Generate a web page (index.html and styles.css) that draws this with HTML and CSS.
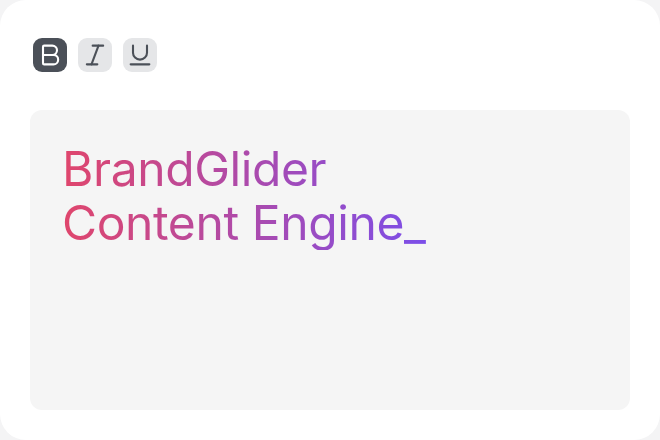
FILE: index.html
```html
<!DOCTYPE html>
<html>
<head>
<meta charset="utf-8">
<link rel="stylesheet" href="styles.css">
</head>
<body>
<div class="card">
  <div class="toolbar">
    <button class="tool active" aria-label="Bold">
      <svg viewBox="0 0 24 24" width="28" height="28"><path d="M6 12h9a4 4 0 0 1 0 8H7a1 1 0 0 1-1-1V5a1 1 0 0 1 1-1h7a4 4 0 0 1 0 8"/></svg>
    </button>
    <button class="tool" aria-label="Italic">
      <svg viewBox="0 0 24 24" width="28" height="28"><line x1="19" y1="4" x2="10" y2="4"/><line x1="14" y1="20" x2="5" y2="20"/><line x1="15" y1="4" x2="9" y2="20"/></svg>
    </button>
    <button class="tool" aria-label="Underline">
      <svg viewBox="0 0 24 24" width="28" height="28"><path d="M6 4v6a6 6 0 0 0 12 0V4"/><line x1="4" y1="20" x2="20" y2="20"/></svg>
    </button>
  </div>
  <div class="editor">
    <div class="headline">BrandGlider<br>Content Engine_</div>
  </div>
</div>
</body>
</html>
```
FILE: styles.css
```css
html, body {
  margin: 0;
  padding: 0;
  background: #f4f4f5;
}
.card {
  width: 660px;
  height: 440px;
  box-sizing: border-box;
  background: #ffffff;
  border-radius: 26px;
  padding: 38px 30px 30px 30px;
  display: flex;
  flex-direction: column;
  font-family: Inter, "Noto Sans", sans-serif;
}
.toolbar {
  display: flex;
  gap: 11px;
  padding-left: 3px;
}
.tool {
  width: 34px;
  height: 34px;
  border: none;
  padding: 0;
  margin: 0;
  border-radius: 9px;
  background: #e5e6e8;
  display: flex;
  align-items: center;
  justify-content: center;
  color: #4b5058;
}
.tool.active {
  background: #4b5058;
  color: #ffffff;
}
.tool svg {
  fill: none;
  stroke: currentColor;
  stroke-width: 1.8;
  stroke-linecap: round;
  stroke-linejoin: round;
}
.editor {
  margin-top: 38px;
  flex: 1;
  background: #f5f5f5;
  border-radius: 12px;
  padding: 32px 32px;
}
.headline {
  display: inline-block;
  font-size: 48px;
  line-height: 54px;
  font-weight: 400;
  letter-spacing: -0.4px;
  background: linear-gradient(90deg, #e0466c 0%, #7b4ee9 100%);
  -webkit-background-clip: text;
  background-clip: text;
  color: transparent;
}
```
